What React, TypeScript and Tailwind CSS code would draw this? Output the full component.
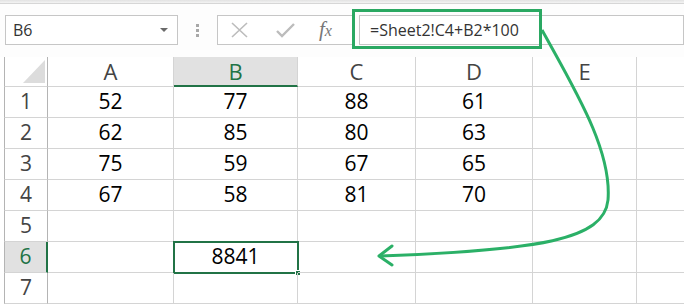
import { Fragment } from 'react'

const cols = [
  { key: 'A', w: 'w-[126px]' },
  { key: 'B', w: 'w-[124px]' },
  { key: 'C', w: 'w-[118px]' },
  { key: 'D', w: 'w-[117px]' },
  { key: 'E', w: 'w-[104px]' },
  { key: '', w: 'w-[60px]' },
]

const data: (number | null)[][] = [
  [52, 77, 88, 61],
  [62, 85, 80, 63],
  [75, 59, 67, 65],
  [67, 58, 81, 70],
  [],
  [null, 8841],
  [],
]

const font = { fontFamily: '"Open Sans", "Noto Sans", sans-serif' }

export default function App() {
  return (
    <div className="relative w-[684px] h-[306px] overflow-hidden bg-white text-[#222]" style={font}>
      {/* top strip */}
      <div className="h-[4px] bg-gradient-to-b from-[#e2e2e2] to-[#f3f3f3] border-b border-[#d6d6d6]" />

      {/* formula bar */}
      <div className="h-[53px] flex items-start pt-[11px] bg-[#fdfdfd]">
        <div className="ml-[5px] shrink-0 w-[173px] h-[30px] border border-[#c6c6c6] bg-white flex items-center justify-between pl-[7px] pr-[9px]">
          <span className="text-[16px] text-[#333]">B6</span>
          <span className="w-0 h-0 border-l-[4px] border-r-[4px] border-t-[4px] border-l-transparent border-r-transparent border-t-[#6a6a6a]" />
        </div>
        <div className="w-[39px] shrink-0 h-[30px] flex flex-col items-center justify-center gap-[2px]">
          <span className="w-[3px] h-[3px] bg-[#a8a8a8]" />
          <span className="w-[3px] h-[3px] bg-[#a8a8a8]" />
          <span className="w-[3px] h-[3px] bg-[#a8a8a8]" />
        </div>
        <div className="w-[138px] shrink-0 h-[30px] border border-[#c6c6c6] bg-white flex items-center">
          <svg width="46" height="28" viewBox="0 0 46 28">
            <path d="M14 7 L29 21 M29 7 L14 21" stroke="#bcbcbc" strokeWidth="1.6" fill="none" />
          </svg>
          <svg width="46" height="28" viewBox="0 0 46 28">
            <path d="M13 15 L18 20 L30 8" stroke="#bcbcbc" strokeWidth="2.4" fill="none" />
          </svg>
          <span className="ml-[9px] text-[21px] italic text-[#777]" style={{ fontFamily: '"Liberation Serif", serif' }}>
            f<span className="text-[16px]">x</span>
          </span>
        </div>
        <div className="ml-[4px] flex-1 h-[30px] border border-[#c6c6c6] bg-white flex items-center pl-[10px]">
          <span className="text-[16px] text-[#333]">=Sheet2!C4+B2*100</span>
        </div>
      </div>

      {/* grid */}
      <div className="flex flex-col">
        {/* header row */}
        <div className="flex h-[30px]">
          <div className="w-[4px] shrink-0" />
          <div className="w-[44px] shrink-0 border-l border-r border-b border-[#b4b4b4] border-b-[#d4d4d4] relative">
            <div
              className="absolute left-[18px] top-[3px] w-[22px] h-[23px] bg-[#dcdcdc]"
              style={{ clipPath: 'polygon(100% 0, 100% 100%, 0 100%)' }}
            />
          </div>
          {cols.map((c) => (
            <div
              key={c.key}
              className={`${c.w} shrink-0 flex items-center justify-center text-[22px] border-r border-[#d4d4d4] ${
                c.key === 'B'
                  ? 'bg-[#e1e1e1] border-b-2 border-b-[#217346] text-[#217346]'
                  : 'border-b text-[#444]'
              }`}
            >
              {c.key}
            </div>
          ))}
        </div>

        {data.map((row, ri) => (
          <div key={ri} className="flex h-[31px]">
            <div className="w-[4px] shrink-0" />
            <div
              className={`w-[44px] shrink-0 border-l border-[#b4b4b4] border-b border-b-[#d4d4d4] flex items-center justify-center text-[21px] ${
                ri === 5
                  ? 'bg-[#e1e1e1] border-r-2 border-r-[#217346] text-[#217346]'
                  : 'border-r text-[#444]'
              }`}
            >
              {ri + 1}
            </div>
            {cols.map((c, ci) => (
              <Fragment key={c.key}>
                <div
                  className={`${c.w} shrink-0 relative flex items-center justify-center text-[21px] text-black border-r border-b border-[#d4d4d4]`}
                >
                  {row[ci] ?? ''}
                  {ri === 5 && ci === 1 && (
                    <div className="absolute -left-[1px] -top-[1px] w-[126px] h-[33px] border-2 border-[#217346]">
                      <div className="absolute -right-[4px] -bottom-[4px] w-[6px] h-[6px] bg-[#217346] border border-white" />
                    </div>
                  )}
                </div>
              </Fragment>
            ))}
          </div>
        ))}
      </div>

      {/* annotation */}
      <svg className="absolute left-0 top-0 pointer-events-none" width="684" height="306" viewBox="0 0 684 306">
        <rect x="353.5" y="10.5" width="187" height="37" fill="none" stroke="#2aa862" strokeWidth="3" />
        <path
          d="M542 30 C575 90, 612 150, 608 200 C604 240, 540 250, 380 256"
          fill="none"
          stroke="#2bb067"
          strokeWidth="3"
        />
        <path d="M392 246 L379 256 L392 265" fill="none" stroke="#2bb067" strokeWidth="3" strokeLinecap="round" strokeLinejoin="round" />
      </svg>
    </div>
  )
}
